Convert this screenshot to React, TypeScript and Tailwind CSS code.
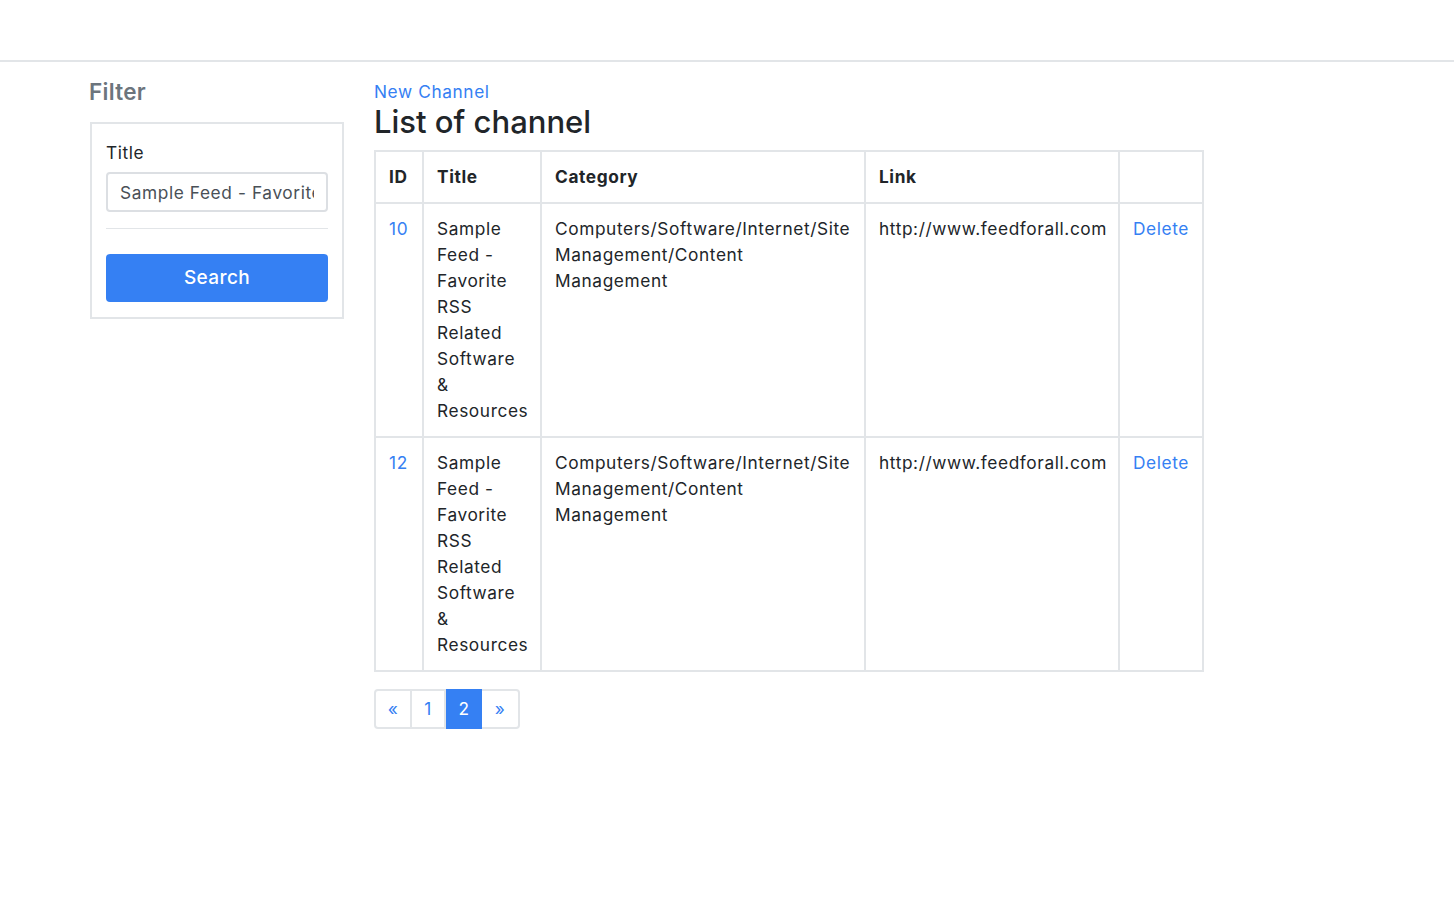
import React from "react";

type Channel = {
  id: number;
  title: string;
  category: string;
  link: string;
};

const channels: Channel[] = [
  {
    id: 10,
    title: "Sample Feed - Favorite RSS Related Software & Resources",
    category: "Computers/Software/Internet/Site Management/Content Management",
    link: "http://www.feedforall.com",
  },
  {
    id: 12,
    title: "Sample Feed - Favorite RSS Related Software & Resources",
    category: "Computers/Software/Internet/Site Management/Content Management",
    link: "http://www.feedforall.com",
  },
];

const cell = "border-2 border-[#e2e5e8] px-[13px] py-[12px] align-top";

export default function App() {
  return (
    <div className="min-h-screen bg-white text-[17.3px] leading-[26px] tracking-[0.6px] text-[#212529] font-['Inter','Noto_Sans',sans-serif]">
      {/* navbar */}
      <div className="h-[62px] border-b-2 border-[#e2e5e8]" />

      <div className="flex gap-[30px] pl-[90px] pt-[16px]">
        {/* filter */}
        <aside className="w-[254px] shrink-0">
          <h5 className="-ml-[1px] text-[22.5px] leading-[28px] font-semibold tracking-[0.3px] text-[#6c757d]">Filter</h5>
          <div className="mt-[16px] border-2 border-[#e2e5e8] px-[14px] pt-[16px] pb-[15px]">
            <label className="block">Title</label>
            <input
              readOnly
              value="Sample Feed - Favorite RSS Related Software & Resources"
              className="mt-[6px] block h-[40px] w-full rounded-[4px] border-2 border-[#dcdfe3] px-[12px] text-[17.3px] tracking-[0.6px] text-[#495057] outline-none"
            />
            <hr className="mt-[16px] mb-[25px] border-t border-[#e2e5e8]" />
            <button className="h-[48px] w-full rounded-[4px] bg-[#3580f3] text-[19px] font-medium tracking-[0.4px] text-white">
              Search
            </button>
          </div>
        </aside>

        {/* list */}
        <main className="w-[830px] pt-[1px]">
          <a className="text-[#3580f3]" href="#">New Channel</a>
          <h2 className="text-[31px] leading-[34px] font-medium tracking-[0px] mt-[0px] mb-[11px]">List of channel</h2>
          <table className="w-[828px] table-fixed border-collapse">
            <colgroup>
              <col className="w-[48px]" />
              <col className="w-[118px]" />
              <col className="w-[324px]" />
              <col className="w-[254px]" />
              <col className="w-[84px]" />
            </colgroup>
            <thead>
              <tr className="text-left font-bold">
                <th className={cell}>ID</th>
                <th className={cell}>Title</th>
                <th className={cell}>Category</th>
                <th className={cell}>Link</th>
                <th className={cell}></th>
              </tr>
            </thead>
            <tbody>
              {channels.map((c) => (
                <tr key={c.id}>
                  <td className={cell}>
                    <a href="#" className="text-[#3580f3]">{c.id}</a>
                  </td>
                  <td className={cell}>{c.title}</td>
                  <td className={cell}>{c.category}</td>
                  <td className={cell}>{c.link}</td>
                  <td className={cell}>
                    <a href="#" className="text-[#3580f3]">Delete</a>
                  </td>
                </tr>
              ))}
            </tbody>
          </table>

          <nav className="mt-[17px] flex">
            <span className="flex h-[40px] w-[38px] items-center justify-center rounded-l-[4px] border-2 border-[#e2e5e8] text-[#3580f3]">«</span>
            <span className="flex h-[40px] w-[34px] items-center justify-center border-2 border-l-0 border-[#e2e5e8] text-[#3580f3]">1</span>
            <span className="flex h-[40px] w-[36px] items-center justify-center bg-[#3580f3] text-white">2</span>
            <span className="flex h-[40px] w-[38px] items-center justify-center rounded-r-[4px] border-2 border-l-0 border-[#e2e5e8] text-[#3580f3]">»</span>
          </nav>
        </main>
      </div>
    </div>
  );
}
